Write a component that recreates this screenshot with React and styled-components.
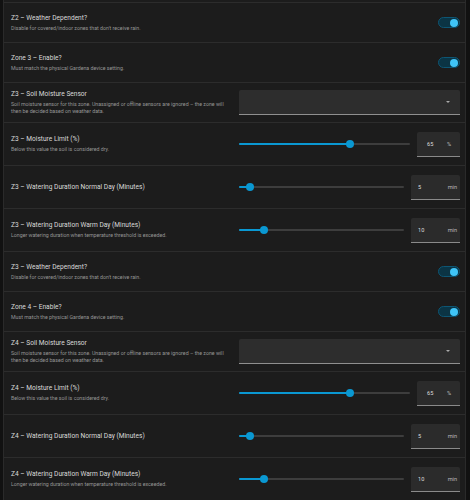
import React from "react"
import styled, { createGlobalStyle } from "styled-components"

const GlobalStyle = createGlobalStyle`
  html, body {
    margin: 0;
    padding: 0;
    background: #111111;
  }
  body {
    font-family: Roboto, "Noto Sans", sans-serif;
    -webkit-font-smoothing: antialiased;
  }
`

const Card = styled.div`
  margin: 0 4px 0 3px;
  padding-top: 2px;
  background: #1c1c1c;
  border-left: 1px solid #2a2a2a;
  border-right: 1px solid #2a2a2a;
`

const Row = styled.div`
  display: grid;
  grid-template-columns: 224px 1fr;
  column-gap: 4px;
  align-items: center;
  height: ${props => props.$h}px;
  padding: 0 5px 0 7px;
  border-top: 1px solid #2c2c2c;
  box-sizing: border-box;
`

const Info = styled.div`
  display: flex;
  flex-direction: column;
`

const Title = styled.div`
  color: #dadada;
  font-size: 6.6px;
  font-weight: 400;
  line-height: 9px;
`

const Desc = styled.div`
  margin-top: 2px;
  color: #969696;
  font-size: 5.25px;
  line-height: 7px;
`

const Control = styled.div`
  display: flex;
  align-items: center;
  justify-content: flex-end;
  gap: 7px;
`

const SwitchTrack = styled.div`
  position: relative;
  width: 22px;
  height: 11px;
  border-radius: 6px;
  background: #0b3444;
  border: 1px solid #0d5674;
  box-sizing: border-box;
`

const SwitchKnob = styled.div`
  position: absolute;
  top: 1px;
  right: 1px;
  width: 8px;
  height: 8px;
  border-radius: 50%;
  background: #3fc4f7;
`

const Select = styled.div`
  flex: 1;
  height: 25px;
  background: #2d2d2d;
  border-radius: 2px 2px 0 0;
  border-bottom: 1px solid #8f8f8f;
  box-sizing: border-box;
  display: flex;
  align-items: center;
  justify-content: flex-end;
  padding-right: 10px;
`

const Caret = styled.div`
  width: 0;
  height: 0;
  border-left: 2px solid transparent;
  border-right: 2px solid transparent;
  border-top: 2px solid #aaaaaa;
`

const Slider = styled.div`
  position: relative;
  flex: 1;
  height: 8px;
`

const Rail = styled.div`
  position: absolute;
  left: 0;
  right: 0;
  top: 3px;
  height: 2px;
  border-radius: 1px;
  background: #3d3d3d;
`

const Fill = styled.div`
  position: absolute;
  left: 0;
  top: 3px;
  height: 2px;
  border-radius: 1px;
  background: #0a98d2;
`

const Thumb = styled.div`
  position: absolute;
  top: 0;
  width: 8px;
  height: 8px;
  margin-left: -4px;
  border-radius: 50%;
  background: #0a98d2;
`

const NumBox = styled.div`
  width: ${props => props.$w}px;
  height: 25px;
  background: #2b2b2b;
  border-radius: 2px 2px 0 0;
  border-bottom: 1px solid #8a8a8a;
  box-sizing: border-box;
  display: flex;
  align-items: center;
  justify-content: space-between;
  padding: 0 ${props => props.$pr}px 0 ${props => props.$pl}px;
  font-size: 5.6px;
`

const Value = styled.span`
  color: #dcdcdc;
`

const Unit = styled.span`
  color: #bdbdbd;
`

const Switch = () => (
  <SwitchTrack>
    <SwitchKnob />
  </SwitchTrack>
)

const Range = ({ value, min, max, unit }) => {
  const pct = ((value - min) / (max - min)) * 100
  const wide = unit !== "%"
  return (
    <>
      <Slider>
        <Rail />
        <Fill style={{ width: `${pct}%` }} />
        <Thumb style={{ left: `${pct}%` }} />
      </Slider>
      <NumBox $w={wide ? 49 : 43} $pl={wide ? 7 : 10} $pr={wide ? 3 : 9}>
        <Value>{value}</Value>
        <Unit>{unit}</Unit>
      </NumBox>
    </>
  )
}

const zoneRows = (prev, zone) => [
  {
    title: `Z${prev} – Weather Dependent?`,
    desc: "Disable for covered/indoor zones that don't receive rain.",
    kind: "switch",
  },
  {
    title: `Zone ${zone} – Enable?`,
    desc: "Must match the physical Gardena device setting.",
    kind: "switch",
  },
  {
    title: `Z${zone} – Soil Moisture Sensor`,
    desc: "Soil moisture sensor for this zone. Unassigned or offline sensors are ignored – the zone will then be decided based on weather data.",
    kind: "select",
  },
  {
    title: `Z${zone} – Moisture Limit (%)`,
    desc: "Below this value the soil is considered dry.",
    kind: "range",
    value: 65,
    min: 0,
    max: 100,
    unit: "%",
  },
  {
    title: `Z${zone} – Watering Duration Normal Day (Minutes)`,
    kind: "range",
    value: 5,
    min: 1,
    max: 60,
    unit: "min",
  },
  {
    title: `Z${zone} – Watering Duration Warm Day (Minutes)`,
    desc: "Longer watering duration when temperature threshold is exceeded.",
    kind: "range",
    value: 10,
    min: 1,
    max: 60,
    unit: "min",
  },
]

const rows = [...zoneRows(2, 3), ...zoneRows(3, 4)]

export default function App() {
  return (
    <>
      <GlobalStyle />
      <Card>
        {rows.map((row, i) => (
          <Row key={i} $h={row.kind === "range" ? 43 : 40}>
            <Info>
              <Title>{row.title}</Title>
              {row.desc && <Desc>{row.desc}</Desc>}
            </Info>
            <Control>
              {row.kind === "switch" && <Switch />}
              {row.kind === "select" && (
                <Select>
                  <Caret />
                </Select>
              )}
              {row.kind === "range" && <Range {...row} />}
            </Control>
          </Row>
        ))}
      </Card>
    </>
  )
}
